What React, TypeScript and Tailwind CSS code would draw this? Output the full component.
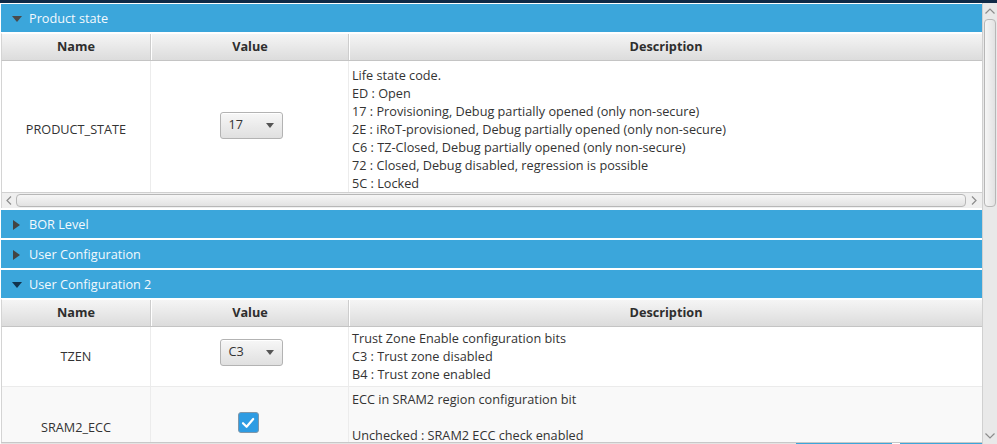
import React from "react";

function SectionHeader({ title, open, focus }: { title: string; open: boolean; focus?: boolean }) {
  return (
    <div className="h-[28px] shrink-0 bg-[#3ba6db] flex items-center">
      <div className="w-[28px] pl-[3px] pt-[1px] flex items-center justify-center">
        {open ? (
          <svg width="10" height="6" viewBox="0 0 10 6">
            <polygon points="0,0 10,0 5,6" fill={focus ? "#12334d" : "#4a4a4a"} />
          </svg>
        ) : (
          <svg width="7" height="10" viewBox="0 0 7 10">
            <polygon points="0,0 7,5 0,10" fill="#434343" />
          </svg>
        )}
      </div>
      <span className="text-[#f3f9fd] text-[12.7px] leading-none pt-[1px]">{title}</span>
    </div>
  );
}

function TableHeader() {
  return (
    <div className="h-[28px] shrink-0 flex border-t border-white border-b border-b-[#c4c4c4] border-l border-l-[#d4d4d4] bg-gradient-to-b from-[#f5f5f5] to-[#dcdcdc] text-[12.7px] font-bold text-[#2e2e2e]">
      <div className="w-[149px] border-r border-[#cdcdcd] flex items-center justify-center">Name</div>
      <div className="w-[198px] border-r border-[#cdcdcd] border-l border-l-white flex items-center justify-center">Value</div>
      <div className="flex-1 border-l border-l-white flex items-center justify-center">Description</div>
    </div>
  );
}

function Dropdown({ value }: { value: string }) {
  return (
    <div className="w-[63px] h-[27px] mb-[9px] ml-[3px] rounded-[3px] border border-[#b3b3b3] bg-gradient-to-b from-[#f7f7f7] to-[#e0e0e0] flex items-center pl-[8px] pr-[8px] justify-between text-[12.7px] text-[#333] shadow-[inset_0_1px_0_#ffffff]">
      <span>{value}</span>
      <svg width="8" height="5" viewBox="0 0 8 5">
        <polygon points="0,0 8,0 4,5" fill="#555" />
      </svg>
    </div>
  );
}

function Checkbox() {
  return (
    <div className="w-[21px] h-[21px] mb-[10px] -ml-[3px] rounded-[3px] bg-[#2e9ce3] border border-[#7f97aa] flex items-center justify-center">
      <svg width="14" height="12" viewBox="0 0 14 12">
        <path d="M2 6.2 L5.6 9.8 L12.2 2" stroke="white" strokeWidth="2.2" fill="none" strokeLinecap="round" strokeLinejoin="round" />
      </svg>
    </div>
  );
}

function Row({
  name,
  value,
  lines,
  height,
  bg,
  descClass,
}: {
  name: string;
  value: React.ReactNode;
  lines: string[];
  height: string;
  bg: string;
  descClass: string;
}) {
  return (
    <div className={`flex shrink-0 ${height} ${bg} border-b border-[#ebebeb] text-[12.7px] text-[#333]`}>
      <div className="w-[149px] border-r border-[#ececec] flex items-center justify-center">{name}</div>
      <div className="w-[198px] border-r border-[#ececec] flex items-center justify-center">{value}</div>
      <div className={`flex-1 flex flex-col justify-start pl-[3px] leading-[18px] ${descClass}`}>
        {lines.map((l, i) => (
          <div key={i} className="h-[18px] whitespace-nowrap">
            {l}
          </div>
        ))}
      </div>
    </div>
  );
}

function HScroll() {
  return (
    <div className="h-[16px] shrink-0 flex items-center bg-[#efefef] border-t border-[#d0d0d0] border-l border-l-[#d4d4d4]">
      <div className="w-[14px] flex items-center justify-center">
        <svg width="6" height="9" viewBox="0 0 6 9">
          <polyline points="5,0.5 1,4.5 5,8.5" stroke="#8c8c8c" strokeWidth="1.2" fill="none" />
        </svg>
      </div>
      <div className="flex-1 h-[13px] rounded-[4px] border border-[#b7b7b7] bg-gradient-to-b from-[#f6f6f6] to-[#e2e2e2]" />
      <div className="w-[16px] flex items-center justify-center">
        <svg width="6" height="9" viewBox="0 0 6 9">
          <polyline points="1,0.5 5,4.5 1,8.5" stroke="#8c8c8c" strokeWidth="1.2" fill="none" />
        </svg>
      </div>
    </div>
  );
}

function VScroll() {
  return (
    <div className="w-[15px] shrink-0 flex flex-col bg-[#e9e9e9] border-l border-[#d0d0d0]">
      <div className="h-[16px] flex items-center justify-center">
        <svg width="10" height="6" viewBox="0 0 10 6">
          <polyline points="0.5,5.5 5,1 9.5,5.5" stroke="#8c8c8c" strokeWidth="1.2" fill="none" />
        </svg>
      </div>
      <div className="h-[188px] mx-[1px] rounded-[4px] border border-[#b7b7b7] bg-gradient-to-r from-[#f6f6f6] to-[#e2e2e2]" />
      <div className="flex-1" />
      <div className="h-[16px] flex items-center justify-center">
        <svg width="10" height="6" viewBox="0 0 10 6">
          <polyline points="0.5,0.5 5,5 9.5,0.5" stroke="#8c8c8c" strokeWidth="1.2" fill="none" />
        </svg>
      </div>
    </div>
  );
}

export default function App() {
  return (
    <div className="w-[997px] h-[444px] overflow-hidden bg-white flex flex-col font-['Open_Sans',sans-serif]">
      <div className="h-[3px] shrink-0 bg-[#0f2a47]" />
      <div className="flex flex-1 min-h-0">
        <div className="w-[982px] flex flex-col pl-[1px] pt-[1px] min-h-0">
          <SectionHeader title="Product state" open />
          <div className="h-[1px] shrink-0" />
          <TableHeader />
          <div className="h-[131px] shrink-0 overflow-hidden border-l border-[#d4d4d4]">
            <Row
              name="PRODUCT_STATE"
              value={<Dropdown value="17" />}
              height="h-[138px]"
              bg="bg-white"
              descClass="pt-[5px]"
              lines={[
                "Life state code.",
                "ED : Open",
                "17 : Provisioning, Debug partially opened (only non-secure)",
                "2E : iRoT-provisioned, Debug partially opened (only non-secure)",
                "C6 : TZ-Closed, Debug partially opened (only non-secure)",
                "72 : Closed, Debug disabled, regression is possible",
                "5C : Locked",
              ]}
            />
          </div>
          <HScroll />
          <div className="h-[2px] shrink-0" />
          <SectionHeader title="BOR Level" open={false} />
          <div className="h-[2px] shrink-0" />
          <SectionHeader title="User Configuration" open={false} />
          <div className="h-[2px] shrink-0" />
          <SectionHeader title="User Configuration 2" open focus />
          <div className="h-[1px] shrink-0" />
          <TableHeader />
          <div className="flex-1 min-h-0 overflow-hidden border-l border-[#d4d4d4]">
            <Row
              name="TZEN"
              value={<Dropdown value="C3" />}
              height="h-[60px]"
              bg="bg-white"
              descClass="pt-[2px]"
              lines={["Trust Zone Enable configuration bits", "C3 : Trust zone disabled", "B4 : Trust zone enabled"]}
            />
            <Row
              name="SRAM2_ECC"
              value={<Checkbox />}
              height="h-[82px]"
              bg="bg-[#f9f9f9]"
              descClass="pt-[3px]"
              lines={[
                "ECC in SRAM2 region configuration bit",
                "",
                "Unchecked : SRAM2 ECC check enabled",
                "Checked : SRAM2 ECC check disabled",
              ]}
            />
          </div>
          <div className="h-[1px] shrink-0 bg-[#c8c8c8]" />
          <div className="h-[1px] shrink-0 flex">
            <div className="w-[795px] bg-[#e4e4e4]" />
            <div className="w-[96px] bg-[#3ba6db]" />
            <div className="w-[8px] bg-white" />
            <div className="flex-1 bg-[#3ba6db]" />
          </div>
        </div>
        <VScroll />
      </div>
    </div>
  );
}
